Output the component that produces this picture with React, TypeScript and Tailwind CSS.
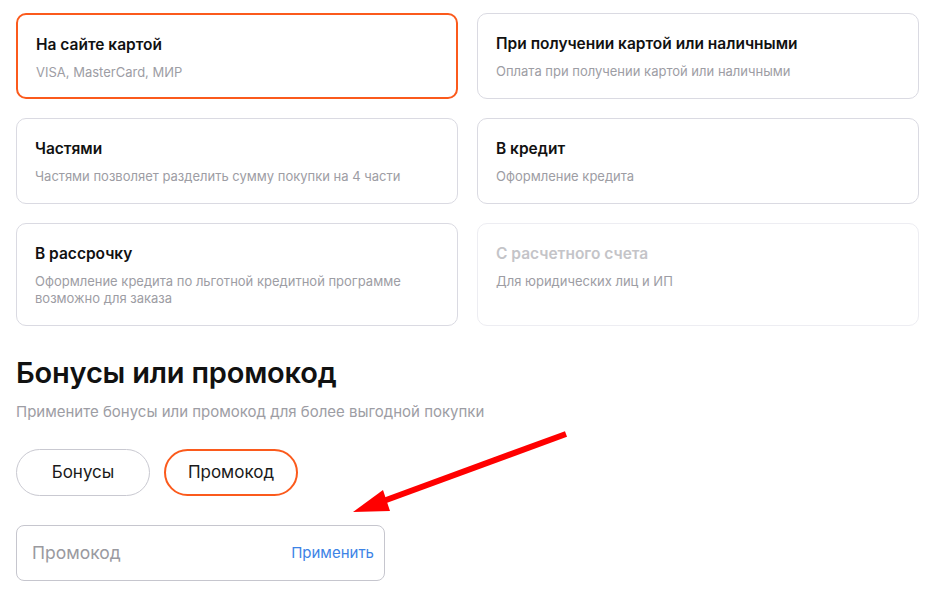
import React from 'react';

interface PayOption {
  title: string;
  subtitle: string;
  selected?: boolean;
  disabled?: boolean;
}

const options: PayOption[] = [
  { title: 'На сайте картой', subtitle: 'VISA, MasterCard, МИР', selected: true },
  { title: 'При получении картой или наличными', subtitle: 'Оплата при получении картой или наличными' },
  { title: 'Частями', subtitle: 'Частями позволяет разделить сумму покупки на 4 части' },
  { title: 'В кредит', subtitle: 'Оформление кредита' },
  { title: 'В рассрочку', subtitle: 'Оформление кредита по льготной кредитной программе возможно для заказа' },
  { title: 'С расчетного счета', subtitle: 'Для юридических лиц и ИП', disabled: true },
];

const PayCard: React.FC<{ option: PayOption }> = ({ option }) => {
  const frame = option.selected
    ? 'border-2 border-[#fb5a1c] px-[18px] pt-[20px] pb-[16px]'
    : option.disabled
      ? 'border border-[#ededf2] px-[18px] pt-[20px] pb-[18px]'
      : 'border border-[#dadae2] px-[18px] pt-[20px] pb-[18px]';

  return (
    <div className={`rounded-[10px] bg-white ${frame}`}>
      <div
        className={`text-[15.5px] leading-[20px] font-semibold ${
          option.disabled ? 'text-[#c4c4c8]' : 'text-[#111111]'
        }`}
      >
        {option.title}
      </div>
      <div className="mt-[9px] text-[13px] leading-[17px] text-[#9d9da4]">{option.subtitle}</div>
    </div>
  );
};

export default function App() {
  return (
    <div
      className="relative min-h-[599px] w-[932px] bg-white pl-[16px] pr-[13px] pt-[13px]"
      style={{ fontFamily: 'Inter, "Noto Sans", sans-serif' }}
    >
      <div className="grid grid-cols-2 items-stretch gap-[19px]">
        {options.map((o) => (
          <PayCard key={o.title} option={o} />
        ))}
      </div>

      <h2 className="mt-[29px] text-[29px] leading-[36px] font-semibold tracking-[-0.2px] text-[#111111]">
        Бонусы или промокод
      </h2>
      <p className="mt-[11px] text-[15px] leading-[20px] text-[#9d9da4]">
        Примените бонусы или промокод для более выгодной покупки
      </p>

      <div className="mt-[27px] flex gap-[14px]">
        <button className="flex h-[47px] w-[134px] items-center justify-center rounded-full border border-[#c9c9d1] text-[17px] text-[#1a1a1a]">
          Бонусы
        </button>
        <button className="flex h-[47px] w-[134px] items-center justify-center rounded-full border-2 border-[#fb5a1c] text-[17px] text-[#1a1a1a]">
          Промокод
        </button>
      </div>

      <div className="mt-[29px] flex h-[56px] w-[369px] items-center justify-between rounded-[8px] border border-[#c6c6ce] pl-[15px] pr-[10px]">
        <span className="text-[17.5px] text-[#9a9aa0]">Промокод</span>
        <span className="text-[15px] text-[#3d83e6]">Применить</span>
      </div>

      <svg
        className="pointer-events-none absolute left-0 top-0"
        width="932"
        height="599"
        viewBox="0 0 932 599"
      >
        <line x1="566" y1="434" x2="378" y2="503" stroke="#ff0000" strokeWidth="6" />
        <polygon points="353,512 383,490 390,511" fill="#ff0000" />
      </svg>
    </div>
  );
}
